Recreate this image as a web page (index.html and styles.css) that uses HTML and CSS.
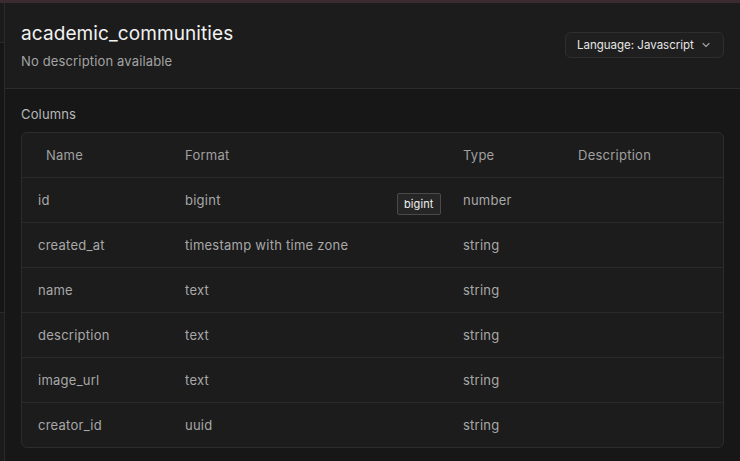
FILE: index.html
```html
<!DOCTYPE html>
<html>
<head>
<meta charset="utf-8">
<link rel="stylesheet" href="styles.css">
</head>
<body>
<div class="topstrip"></div>
<div class="shell">
  <div class="side">
    <div class="side-a"></div>
    <div class="side-b"></div>
    <div class="side-c"></div>
  </div>
  <main class="main">
    <header class="head">
      <div class="head-text">
        <h1 class="title">academic_communities</h1>
        <p class="desc">No description available</p>
      </div>
      <button class="lang"><span>Language: Javascript</span>
        <svg class="chev" width="10" height="10" viewBox="0 0 10 10"><path d="M2 3.5 L5 6.5 L8 3.5" fill="none" stroke="#9a9a9a" stroke-width="1.2" stroke-linecap="round" stroke-linejoin="round"/></svg>
      </button>
    </header>
    <section class="body">
      <div class="label">Columns</div>
      <div class="table">
        <div class="row hdr">
          <div class="c1 h1">Name</div><div class="c2">Format</div><div class="c3">Type</div><div class="c4">Description</div>
        </div>
        <div class="row">
          <div class="c1">id</div><div class="c2 fmt">bigint<span class="tip">bigint</span></div><div class="c3">number</div><div class="c4"></div>
        </div>
        <div class="row">
          <div class="c1">created_at</div><div class="c2">timestamp with time zone</div><div class="c3">string</div><div class="c4"></div>
        </div>
        <div class="row">
          <div class="c1">name</div><div class="c2">text</div><div class="c3">string</div><div class="c4"></div>
        </div>
        <div class="row">
          <div class="c1">description</div><div class="c2">text</div><div class="c3">string</div><div class="c4"></div>
        </div>
        <div class="row">
          <div class="c1">image_url</div><div class="c2">text</div><div class="c3">string</div><div class="c4"></div>
        </div>
        <div class="row last">
          <div class="c1">creator_id</div><div class="c2">uuid</div><div class="c3">string</div><div class="c4"></div>
        </div>
      </div>
    </section>
  </main>
</div>
</body>
</html>
```
FILE: styles.css
```css
* { box-sizing: border-box; }
html, body { margin: 0; padding: 0; background: #171717; height: 100%; overflow: hidden; }
body { font-family: Inter, "Noto Sans", sans-serif; color: #ededed; }
.topstrip { height: 3px; background: #3b2b30; }
.shell { display: flex; height: 458px; }
.side { width: 5px; border-right: 1px solid #2a2a2a; background: #1b1b1b; display: flex; flex-direction: column; }
.side-a { height: 40px; border-bottom: 1px solid #2a2a2a; }
.side-b { height: 270px; border-bottom: 1px solid #2a2a2a; background: #161616; }
.side-c { flex: 1; }
.main { flex: 1; display: flex; flex-direction: column; }
.head { height: 86px; background: #1c1c1c; border-bottom: 1px solid #2c2c2c; display: flex; justify-content: space-between; align-items: flex-start; padding: 19px 16px 0 16px; }
.title { margin: 0; font-size: 19px; font-weight: 400; letter-spacing: 0.1px; color: #f2f2f2; line-height: 24px; }
.desc { margin: 7px 0 0; font-size: 13px; letter-spacing: 0.15px; color: #a3a3a3; line-height: 16px; }
.lang { margin-top: 10px; height: 26px; width: 159px; background: #1f1f1f; border: 1px solid #2e2e2e; border-radius: 6px; color: #e6e6e6; font-family: inherit; font-size: 11.5px; letter-spacing: 0; padding: 0 12px 0 11px; display: flex; align-items: center; justify-content: space-between; white-space: nowrap; }
.chev { flex: none; }
.body { flex: 1; background: #171717; padding: 17px 16px 0 16px; }
.label { font-size: 13px; letter-spacing: 0.15px; color: #b8b8b8; line-height: 16px; margin-bottom: 10px; }
.table { border: 1px solid #2c2c2c; border-radius: 6px; background: #1c1c1c; }
.row { display: flex; height: 45px; align-items: center; border-bottom: 1px solid #2a2a2a; font-size: 13px; letter-spacing: 0.25px; color: #a8a8a8; }
.row.last { border-bottom: none; height: 44px; }
.row.hdr { color: #a0a0a0; }
.c1 { width: 163px; padding-left: 16px; }
.c1.h1 { padding-left: 24px; }
.c2 { width: 278px; position: relative; }
.c3 { width: 115px; }
.c4 { flex: 1; }
.tip { position: absolute; left: 212px; top: 1px; background: #262626; border: 1px solid #4a4a4a; border-radius: 2px; color: #f0f0f0; font-size: 11px; letter-spacing: 0.1px; padding: 3px 6px; line-height: 14px; }
```
